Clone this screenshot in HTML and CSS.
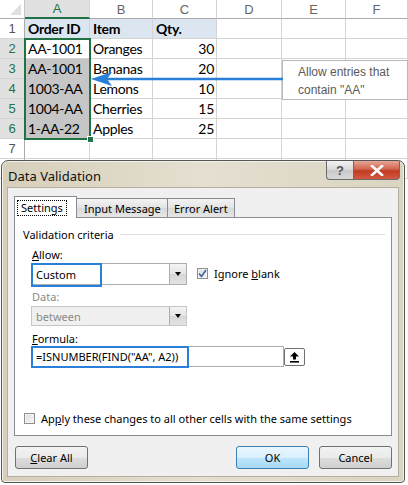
FILE: index.html
```html
<!DOCTYPE html>
<html>
<head>
<meta charset="utf-8">
<link rel="stylesheet" href="styles.css">
</head>
<body>
<div class="sheet">
  <div class="corner"><span class="tri"></span></div>
  <div class="ch sel">A</div><div class="ch">B</div><div class="ch">C</div><div class="ch">D</div><div class="ch">E</div><div class="ch">F</div>

  <div class="rh">1</div>
  <div class="c hd">Order ID</div><div class="c hd">Item</div><div class="c hd">Qty.</div><div class="c"></div><div class="c"></div><div class="c"></div>

  <div class="rh sel">2</div>
  <div class="c active">AA-1001</div><div class="c">Oranges</div><div class="c num">30</div><div class="c"></div><div class="c"></div><div class="c"></div>

  <div class="rh sel">3</div>
  <div class="c shade">AA-1001</div><div class="c">Bananas</div><div class="c num">20</div><div class="c"></div><div class="c"></div><div class="c"></div>

  <div class="rh sel">4</div>
  <div class="c shade">1003-AA</div><div class="c">Lemons</div><div class="c num">10</div><div class="c"></div><div class="c"></div><div class="c"></div>

  <div class="rh sel">5</div>
  <div class="c shade">1004-AA</div><div class="c">Cherries</div><div class="c num">15</div><div class="c"></div><div class="c"></div><div class="c"></div>

  <div class="rh sel">6</div>
  <div class="c shade">1-AA-22</div><div class="c">Apples</div><div class="c num">25</div><div class="c"></div><div class="c"></div><div class="c"></div>

  <div class="rh">7</div>
  <div class="c"></div><div class="c"></div><div class="c"></div><div class="c"></div><div class="c"></div><div class="c"></div>

  <div class="rh"></div>
  <div class="c"></div><div class="c"></div><div class="c"></div><div class="c"></div><div class="c"></div><div class="c"></div>
</div>

<div class="selbox"><span class="handle"></span></div>

<div class="callout">Allow entries that<br>contain "AA"</div>
<svg class="arrow" width="192" height="16" viewBox="0 0 192 16">
  <line x1="16" y1="8" x2="192" y2="8" stroke="#2a7fd8" stroke-width="2.4"/>
  <polygon points="0,8 21,1 16,8 21,15" fill="#2a7fd8"/>
</svg>

<div class="dialog">
  <div class="titlebar">
    <div class="title">Data Validation</div>
    <div class="caps">
      <div class="cap help">?</div>
      <div class="cap close">
        <svg width="14" height="11" viewBox="0 0 14 11"><path d="M2 1 L12 10 M12 1 L2 10" stroke="#fff" stroke-width="2.6" stroke-linecap="square"/></svg>
      </div>
    </div>
  </div>
  <div class="client">
    <div class="tabs">
      <div class="tab on"><span class="focus">Settings</span></div>
      <div class="tab">Input Message</div>
      <div class="tab">Error Alert</div>
    </div>
    <div class="panel">
      <div class="group-title"><span>Validation criteria</span><span class="rule"></span></div>
      <div class="fields">
        <div class="lbl l-allow"><u>A</u>llow:</div>
        <div class="row">
          <div class="combo">
            <div class="val">Custom</div>
            <div class="drop"><span class="dtri"></span></div>
            <div class="hl hl-custom"></div>
          </div>
          <div class="chk-wrap">
            <span class="chk checked">
              <svg width="9" height="9" viewBox="0 0 9 9"><path d="M1 4.5 L3.5 7.5 L8 1" stroke="#3f5fa8" stroke-width="1.6" fill="none"/></svg>
            </span>
            <span>Ignore <u>b</u>lank</span>
          </div>
        </div>
        <div class="lbl l-data dim">Data:</div>
        <div class="combo disabled">
          <div class="val">between</div>
          <div class="drop"><span class="dtri"></span></div>
        </div>
        <div class="lbl l-formula"><u>F</u>ormula:</div>
        <div class="row">
          <div class="formula">
            <div class="val">=ISNUMBER(FIND("AA", A2))</div>
            <div class="hl hl-formula"></div>
          </div>
          <div class="refbtn">
            <svg width="11" height="12" viewBox="0 0 11 12"><path d="M5.5 1 L10 5.5 L7 5.5 L7 8.5 L4 8.5 L4 5.5 L1 5.5 Z" fill="#000"/><rect x="1" y="10" width="9" height="1.6" fill="#000"/></svg>
          </div>
        </div>
      </div>
      <div class="apply">
        <span class="chk"></span>
        <span>Ap<u>p</u>ly these changes to all other cells with the same settings</span>
      </div>
    </div>
    <div class="buttons">
      <div class="btn"><u>C</u>lear All</div>
      <div class="right">
        <div class="btn ok">OK</div>
        <div class="btn">Cancel</div>
      </div>
    </div>
  </div>
</div>
</body>
</html>
```

FILE: styles.css
```css
* { box-sizing: border-box; }
html, body { margin: 0; padding: 0; background: #fff; }
body { width: 408px; height: 485px; overflow: hidden; position: relative; font-family: Lato, "Noto Sans", sans-serif; }

.sheet {
  display: grid;
  grid-template-columns: 25px 65px 63px 64px 65px 64px 62px;
  grid-template-rows: 19px repeat(8, 20px);
  font-family: Lato, "Liberation Sans", sans-serif;
  font-size: 14px;
  letter-spacing: -0.3px;
  color: #000;
}
.corner { background: #fff; border-right: 1px solid #c6c6c6; border-bottom: 1px solid #ababab; position: relative; }
.tri { position: absolute; right: 3px; bottom: 3px; width: 0; height: 0; border-left: 11px solid transparent; border-bottom: 11px solid #dfdfdf; }
.ch {
  background: #fff; border-right: 1px solid #d4d4d4; border-bottom: 1px solid #ababab;
  color: #666; font-family: "Liberation Sans", sans-serif; font-size: 13px; letter-spacing: 0;
  display: flex; align-items: center; justify-content: center;
}
.ch.sel { background: #e1e1e1; color: #217346; border-bottom: 2px solid #217346; }
.rh {
  background: #fff; border-right: 1px solid #ababab; border-bottom: 1px solid #d4d4d4;
  color: #555; font-family: "Liberation Sans", sans-serif; font-size: 13px; letter-spacing: 0;
  display: flex; align-items: center; justify-content: center;
}
.rh.sel { background: #e1e1e1; color: #217346; }
.c {
  border-right: 1px solid #d4d4d4; border-bottom: 1px solid #d4d4d4;
  padding-left: 3px; line-height: 20px; white-space: nowrap; overflow: visible;
}
.c.hd { font-weight: bold; background: #dce6f1; }
.c.num { text-align: right; padding-right: 2px; }
.c.shade { background: #c6c6c6; border-color: #c6c6c6; }

.selbox {
  position: absolute; left: 24px; top: 38px; width: 67px; height: 102px;
  border: 2px solid #217346;
}
.handle {
  position: absolute; right: -5px; bottom: -5px; width: 7px; height: 7px;
  background: #217346; border: 1px solid #fff;
}

.callout {
  position: absolute; left: 282px; top: 60px; width: 126px; height: 40px;
  background: #fff; border: 1px solid #b8b8b8;
  font-family: "Liberation Sans", Arial, sans-serif; font-size: 12px; line-height: 18px;
  color: #5a5a5a; padding: 2px 0 0 15px;
}
.arrow { position: absolute; left: 91px; top: 71px; }

.dialog {
  position: absolute; left: 1px; top: 160px; width: 404px; height: 323px;
  border: 1px solid #555;
  border-radius: 7px 7px 4px 4px;
  background: linear-gradient(to right, #d6cfbb, #e4dfd0 50%, #dad4c2);
  box-shadow: inset 0 0 0 1px #f4f1e8;
  display: flex; flex-direction: column;
  font-family: "Noto Sans", "Open Sans", sans-serif; font-size: 11px; color: #000;
}
.titlebar { height: 28px; display: flex; justify-content: space-between; align-items: flex-start; }
.title { font-size: 13px; padding: 6px 0 0 6px; color: #111; }
.caps { display: flex; margin-right: 4px; }
.cap { height: 19px; display: flex; align-items: center; justify-content: center; border: 1px solid #6b6b6b; border-top: none; }
.help {
  width: 27px; border-radius: 0 0 0 4px; border-right: none;
  background: linear-gradient(#f2f2f2, #d8d8d8 50%, #c8c8c8 51%, #d9d9d9);
  color: #555; font-weight: bold; font-size: 13px; font-family: "Liberation Sans", sans-serif;
}
.close {
  width: 47px; border-radius: 0 0 4px 0;
  background: linear-gradient(#e7a596, #d2664f 45%, #c13a22 55%, #d45a3f);
}
.client {
  flex: 1; margin: 0 5px 5px 5px;
  background: #f0f0f0; border: 1px solid #b5ae9c;
  padding: 8px 6px 7px 6px;
  display: flex; flex-direction: column;
}
.tabs { display: flex; height: 21px; align-items: flex-end; position: relative; z-index: 2; }
.tab {
  height: 19px; padding: 0 6px; display: flex; align-items: center; white-space: nowrap;
  border: 1px solid #898c95; border-bottom: none; margin-left: -1px;
  background: linear-gradient(#f3f3f3, #e3e3e3 50%, #d9d9d9 51%, #e6e6e6);
  font-size: 11px;
}
.tab:first-child { margin-left: 0; }
.tab.on { background: #fff; padding: 0 3px; width: 63px; margin-bottom: -1px; height: 22px; }
.focus { outline: 1px dotted #000; padding: 0 3px; line-height: 14px; }
.tab:nth-child(2) { width: 92px; padding-left: 7px; }
.tab:nth-child(3) { width: 68px; padding-left: 6px; }
.panel {
  height: 219px; background: #fff; border: 1px solid #898c95;
  padding: 9px 0 9px 8px;
  display: flex; flex-direction: column;
}
.group-title { display: flex; align-items: center; height: 15px; font-size: 11px; }
.rule { flex: 1; height: 1px; background: #dcdcdc; margin: 0 6px 0 6px; }
.fields { padding-left: 8px; display: flex; flex-direction: column; }
.lbl { height: 14px; line-height: 14px; font-size: 11px; padding-left: 1px; }
.dim { color: #8a8a8a; }
.l-allow { margin-top: 6px; }
.l-data { margin-top: 5px; }
.l-formula { margin-top: 6px; }
.row { display: flex; align-items: center; }
.combo {
  position: relative; width: 156px; height: 22px; margin-top: 1px;
  border: 1px solid #abadb3; background: #fff;
  display: flex; align-items: center;
}
.combo.disabled { height: 20px; margin-top: 2px; background: #f0f0f0; border-color: #c7c7c7; color: #8a8a8a; }
.val { flex: 1; padding-left: 4px; font-size: 11px; white-space: nowrap; }
.drop {
  width: 17px; height: 100%; border-left: 1px solid #abadb3;
  background: linear-gradient(#f4f4f4, #e4e4e4 50%, #d6d6d6 51%, #e3e3e3);
  display: flex; align-items: center; justify-content: center;
}
.dtri { width: 0; height: 0; border-left: 3.5px solid transparent; border-right: 3.5px solid transparent; border-top: 4px solid #000; }
.hl { position: absolute; border: 2px solid #2a7fd8; pointer-events: none; }
.hl-custom { left: -1px; top: -1px; width: 71px; height: 24px; }
.hl-formula { left: -1px; top: -1px; width: 158px; height: 22px; }
.chk-wrap { display: flex; align-items: center; margin-left: 10px; font-size: 11px; gap: 6px; }
.chk {
  width: 11px; height: 11px; border: 1px solid #8e8f8f;
  background: linear-gradient(135deg, #dcdcdc, #f6f6f6);
  box-shadow: inset 0 0 0 1px #f4f4f4;
  display: inline-flex; align-items: center; justify-content: center;
}
.formula {
  position: relative; width: 253px; height: 21px;
  border: 1px solid #abadb3; background: #fff; display: flex; align-items: center;
}
.refbtn {
  width: 21px; height: 18px; margin-left: 0px;
  border: 1px solid #707070; border-radius: 2px; background: #fff;
  display: flex; align-items: center; justify-content: center;
}
.apply { margin-top: auto; display: flex; align-items: center; gap: 6px; font-size: 11px; padding-left: 1px; }
.buttons { margin-top: 10px; display: flex; justify-content: space-between; padding-left: 1px; }
.right { display: flex; gap: 10px; }
.btn {
  width: 73px; height: 23px; border: 1px solid #707070; border-radius: 3px;
  background: linear-gradient(#f2f2f2, #ebebeb 50%, #dddddd 51%, #cfcfcf);
  display: flex; align-items: center; justify-content: center; font-size: 11px;
}
.btn.ok { border-color: #3c7fb1; background: linear-gradient(#eaf6fd, #d9f0fc 50%, #bee6fd 51%, #a7d9f5); }
u { text-decoration: underline; text-underline-offset: 1px; }
```
